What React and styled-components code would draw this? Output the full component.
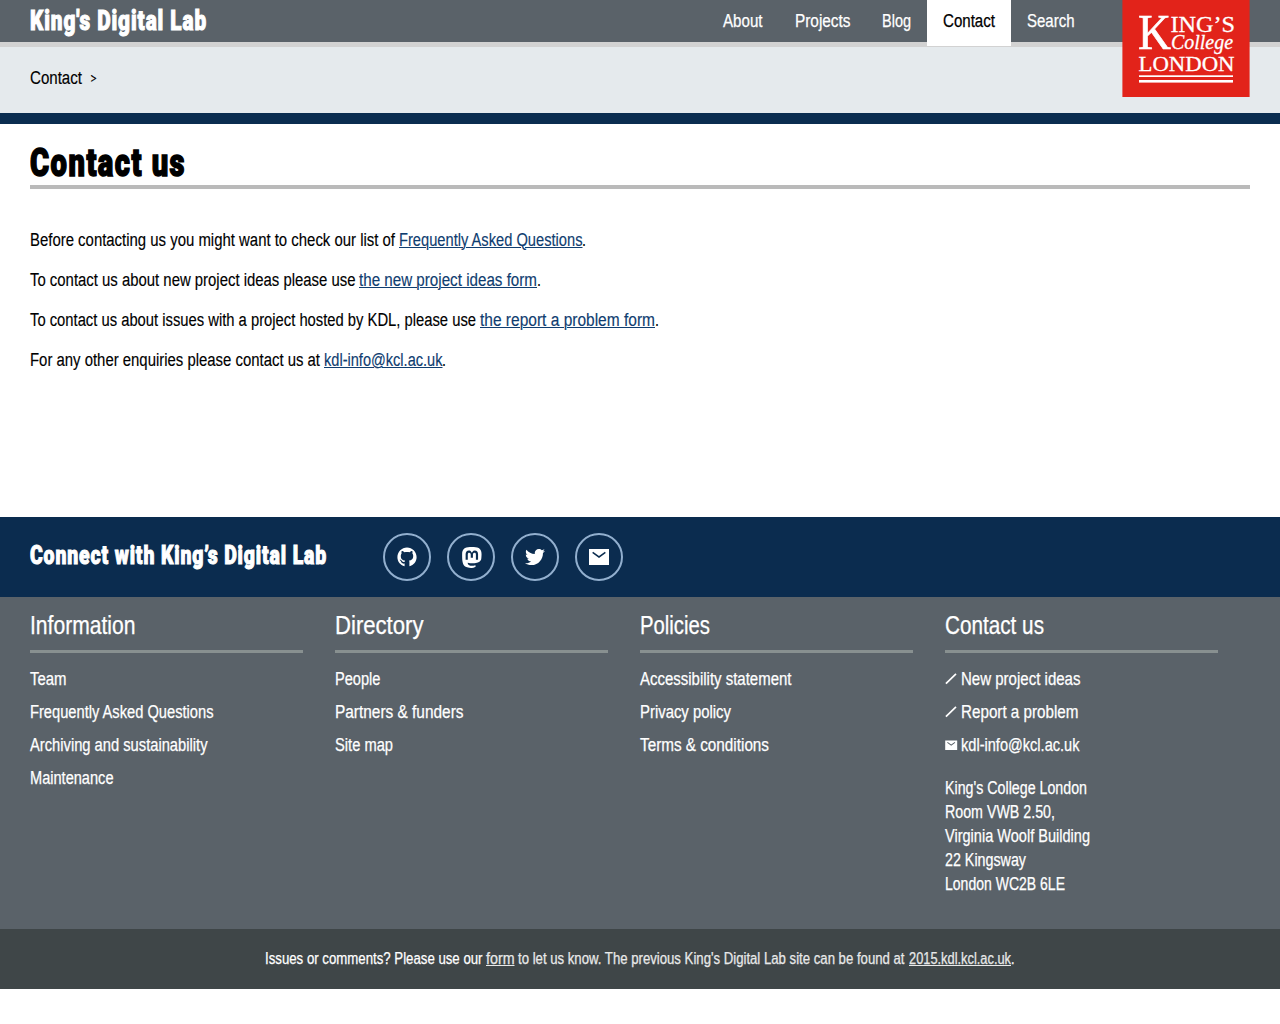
import React, { useLayoutEffect, useRef, useState } from 'react';
import styled, { createGlobalStyle } from 'styled-components';
import { FaTwitter } from 'react-icons/fa';
import { RiMastodonFill } from 'react-icons/ri';

const GlobalStyle = createGlobalStyle`
  * { box-sizing: border-box; }
  body {
    margin: 0;
    background: #fff;
    color: #000;
    font-family: "Liberation Sans", Arial, sans-serif;
    font-size: 18px;
    line-height: 24px;
  }
  a { color: inherit; text-decoration: none; }
  h1, h2, h3, p, ul { margin: 0; padding: 0; font-weight: inherit; font-size: inherit; }
  ul { list-style: none; }
`;

const FitBox = styled.span`
  display: inline-block;
  white-space: nowrap;
  vertical-align: baseline;
`;
const FitText = styled.span`
  display: inline-block;
  transform-origin: 0 50%;
`;

/* Condenses its text horizontally so that it sets to the given measure. */
function Fit({ w, children }) {
  const ref = useRef(null);
  const [scale, setScale] = useState(1);
  useLayoutEffect(() => {
    const natural = ref.current.getBoundingClientRect().width / scale;
    if (natural) setScale(w / natural);
    // eslint-disable-next-line
  }, [w, children]);
  return (
    <FitBox style={{ width: w }}>
      <FitText ref={ref} style={{ transform: `scaleX(${scale})` }}>{children}</FitText>
    </FitBox>
  );
}

const Header = styled.header`
  position: relative;
  display: flex;
  justify-content: space-between;
  height: 47px;
  padding: 0 189.5px 0 30px;
  background: #5a6269;
  border-bottom: 5px solid #d2d2d2;
  color: #fff;
`;
const Brand = styled.a`
  font: 900 27px/43px Roboto, "Liberation Sans", sans-serif;
  letter-spacing: 1.2px;
  -webkit-text-stroke: 1px currentColor;
`;
const Nav = styled.nav`
  display: flex;
  align-items: flex-start;
`;
const NavItem = styled.a`
  height: ${(p) => (p.$active ? 46 : 42)}px;
  padding: 9px 16px 0;
  color: ${(p) => (p.$active ? '#000' : '#fff')};
  background: ${(p) => (p.$active ? '#fff' : 'transparent')};
  -webkit-text-stroke: 0.25px currentColor;
`;
const LogoLink = styled.a`
  position: absolute;
  top: 0;
  right: 30px;
  width: 128px;
  height: 97px;
  svg { display: block; }
`;
const Crumbs = styled.div`
  display: flex;
  gap: 8px;
  height: 77px;
  padding: 19px 30px 0;
  background: #e5eaed;
  border-bottom: 11px solid #0a2d50;
  -webkit-text-stroke: 0.15px currentColor;
`;
const Chevron = styled.span`
  font-family: Inter, sans-serif;
  font-size: 13px;
`;
const Main = styled.main`
  height: 393px;
  padding: 14px 30px 0;
`;
const Title = styled.h1`
  height: 51px;
  border-bottom: 4px solid #bababa;
  font: 900 38px/50px Roboto, "Liberation Sans", sans-serif;
  letter-spacing: 1.9px;
  -webkit-text-stroke: 1.5px currentColor;
`;
const Body = styled.div`
  display: flex;
  flex-direction: column;
  gap: 16px;
  padding-top: 39px;
  -webkit-text-stroke: 0.15px currentColor;
`;
const Line = styled.p`
  display: flex;
`;
const TextLink = styled.a`
  margin: 0 0 0 ${(p) => p.$gap || 3.5}px;
  color: ${(p) => p.$color || '#0f3d70'};
  ${FitText} {
    text-decoration: underline;
    text-decoration-thickness: 1px;
    text-underline-offset: 1px;
  }
`;
const Connect = styled.section`
  display: flex;
  align-items: center;
  gap: 56px;
  height: 80px;
  padding: 0 30px;
  background: #0b2c4f;
  color: #fff;
`;
const ConnectTitle = styled.h2`
  font: 900 25px/32px Roboto, "Liberation Sans", sans-serif;
  letter-spacing: 1.1px;
  padding-bottom: 3px;
  -webkit-text-stroke: 1px currentColor;
`;
const Socials = styled.div`
  display: flex;
  gap: 16px;
`;
const Social = styled.a`
  display: flex;
  align-items: center;
  justify-content: center;
  width: 48px;
  height: 48px;
  border: 2px solid #92afce;
  border-radius: 50%;
`;
const Columns = styled.footer`
  display: grid;
  grid-template-columns: repeat(4, 273px);
  column-gap: 32px;
  height: 332px;
  padding: 9px 30px 0;
  background: #5a6269;
  color: #fff;
  -webkit-text-stroke: 0.25px currentColor;
`;
const ColumnTitle = styled.h3`
  height: 47px;
  border-bottom: 3px solid #889090;
  font-size: 25px;
  line-height: 38px;
`;
const List = styled.ul`
  display: flex;
  flex-direction: column;
  gap: 9px;
  padding-top: 14px;
`;
const Item = styled.li`
  display: flex;
  align-items: center;
  gap: 2.6px;
  svg { flex: none; margin-left: -0.6px; }
`;
const Address = styled.p`
  display: flex;
  flex-direction: column;
  padding-top: 19px;
`;
const Notice = styled.div`
  display: flex;
  justify-content: center;
  height: 60px;
  padding-top: 18px;
  background: #3f4648;
  color: #fff;
  font-size: 16px;
  -webkit-text-stroke: 0.25px currentColor;
`;
const Soft = styled.span`
  margin-left: ${(p) => p.$gap || 0}px;
  color: #e8e9e9;
`;

function MailIcon({ size }) {
  return (
    <svg width={size} height={size} viewBox="0 0 24 24" fill="currentColor">
      <path d="M22 4H2v16h20V4zM18.8 7.9 12 12.9 5.2 7.9 6.1 6.7 12 11l5.9-4.3.9 1.2z" />
    </svg>
  );
}
function GithubIcon() {
  return (
    <svg width="20" height="20" viewBox="0 0 20 20" fill="currentColor">
      <path d="M7.6 19.2C3.2 18.1 .4 14.4 .4 10.2 .4 4.9 4.7 .5 10 .5s9.600 4.400 9.600 9.700c0 4.200-2.800 7.900-7.200 9v-4c0-.8-.2-1.300-.5-1.600 2.700-.3 4.300-1.300 4.300-4.800 0-1-.3-1.700-.8-2.300.1-.5.200-1.300-.1-2.500-.9 0-1.900.6-2.700 1.200-1.700-.4-3.500-.4-5.200 0-.8-.6-1.800-1.200-2.700-1.200-.3 1.200-.2 2-.1 2.500-.5.600-.8 1.300-.8 2.300 0 3.500 1.600 4.500 4.300 4.800-.3.300-.4.700-.5 1.300-.9.300-2 .1-2.700-1-.4-.7-1-1.200-1.800-1.200-.6.100-.3.500.2.800 1 .8.900 2.800 2.800 3.100.6.100 1.100 0 1.500-.1v3.200z" />
    </svg>
  );
}
function PenIcon() {
  return (
    <svg width="14.4" height="14.4" viewBox="0 0 14.4 14.4" fill="none" stroke="currentColor">
      <path d="M1.9 11.7 12 1.9" strokeWidth="1.7" />
    </svg>
  );
}
function Logo() {
  return (
    <svg width="128" height="97" viewBox="0 0 128 97" fill="#fff" fontFamily="Liberation Serif, serif">
      <rect x="0.4" width="127.2" height="97" fill="#e2231a" />
      <g stroke="#fff" strokeWidth="0.3">
        <text x="16" y="49.3" fontSize="51.5" textLength="33" lengthAdjust="spacingAndGlyphs" strokeWidth="0.7">K</text>
        <text x="48.5" y="31.5" fontSize="24" textLength="64.5" lengthAdjust="spacingAndGlyphs">ING’S</text>
        <text x="49" y="49.3" fontSize="21" fontStyle="italic" textLength="62" lengthAdjust="spacingAndGlyphs">College</text>
        <text x="16.5" y="70.5" fontSize="22" textLength="96" lengthAdjust="spacingAndGlyphs">LONDON</text>
      </g>
      <rect x="17" y="75.3" width="94" height="1.7" />
      <rect x="17" y="80" width="94" height="2.6" />
    </svg>
  );
}

const nav = [['About', 39.5], ['Projects', 55.5], ['Blog', 29], ['Contact', 52], ['Search', 47.5]];
const columns = [
  ['Information', 105.5, [['Team', 36.5], ['Frequently Asked Questions', 183.5], ['Archiving and sustainability', 177.5], ['Maintenance', 83.5]]],
  ['Directory', 88.5, [['People', 45.5], ['Partners & funders', 128.5], ['Site map', 58]]],
  ['Policies', 70, [['Accessibility statement', 151.5], ['Privacy policy', 91], ['Terms & conditions', 129]]],
  ['Contact us', 99, [['New project ideas', 119.5, 'pen'], ['Report a problem', 117.5, 'pen'], ['kdl-info@kcl.ac.uk', 118.5, 'mail']]],
];
const address = [["King's College London", 142], ['Room VWB 2.50,', 110], ['Virginia Woolf Building', 145], ['22 Kingsway', 81], ['London WC2B 6LE', 120]];
const paragraphs = [
  ['Before contacting us you might want to check our list of', 365, 'Frequently Asked Questions', 183.5],
  ['To contact us about new project ideas please use', 325.5, 'the new project ideas form', 178],
  ['To contact us about issues with a project hosted by KDL, please use', 446, 'the report a problem form', 175],
  ['For any other enquiries please contact us at', 290, 'kdl-info@kcl.ac.uk', 118.5],
];

export default function App() {
  return (
    <>
      <GlobalStyle />
      <Header>
        <Brand href="#"><Fit w={177}>King's Digital Lab</Fit></Brand>
        <Nav>
          {nav.map(([label, w]) => (
            <NavItem key={label} href="#" $active={label === 'Contact'}><Fit w={w}>{label}</Fit></NavItem>
          ))}
        </Nav>
        <LogoLink href="#"><Logo /></LogoLink>
      </Header>
      <Crumbs>
        <Fit w={52}>Contact</Fit>
        <Chevron><Fit w={7}>&gt;</Fit></Chevron>
      </Crumbs>
      <Main>
        <Title><Fit w={156}>Contact us</Fit></Title>
        <Body>
          {paragraphs.map(([text, w, link, lw]) => (
            <Line key={link}>
              <Fit w={w}>{text}</Fit>
              <TextLink href="#"><Fit w={lw}>{link}</Fit></TextLink>
              <Fit w={4}>.</Fit>
            </Line>
          ))}
        </Body>
      </Main>
      <Connect>
        <ConnectTitle><Fit w={297}>Connect with King’s Digital Lab</Fit></ConnectTitle>
        <Socials>
          <Social href="#"><GithubIcon /></Social>
          <Social href="#"><RiMastodonFill size={25} /></Social>
          <Social href="#"><FaTwitter size={20} /></Social>
          <Social href="#"><MailIcon size={24} /></Social>
        </Socials>
      </Connect>
      <Columns>
        {columns.map(([title, w, items]) => (
          <div key={title}>
            <ColumnTitle><Fit w={w}>{title}</Fit></ColumnTitle>
            <List>
              {items.map(([label, lw, icon]) => (
                <Item key={label}>
                  {icon === 'pen' && <PenIcon />}
                  {icon === 'mail' && <MailIcon size={14.4} />}
                  <a href="#"><Fit w={lw}>{label}</Fit></a>
                </Item>
              ))}
            </List>
            {title === 'Contact us' && (
              <Address>
                {address.map(([line, lw]) => <Fit key={line} w={lw}>{line}</Fit>)}
              </Address>
            )}
          </div>
        ))}
      </Columns>
      <Notice>
        <Fit w={217.5}>Issues or comments? Please use our</Fit>
        <TextLink href="#" $color="#e8e9e9"><Fit w={28.5}>form</Fit></TextLink>
        <Soft $gap={3.5}><Fit w={386.5}>to let us know. The previous King's Digital Lab site can be found at</Fit></Soft>
        <TextLink href="#" $color="#e8e9e9" $gap={4.7}><Fit w={102}>2015.kdl.kcl.ac.uk</Fit></TextLink>
        <Fit w={3.5}>.</Fit>
      </Notice>
    </>
  );
}
